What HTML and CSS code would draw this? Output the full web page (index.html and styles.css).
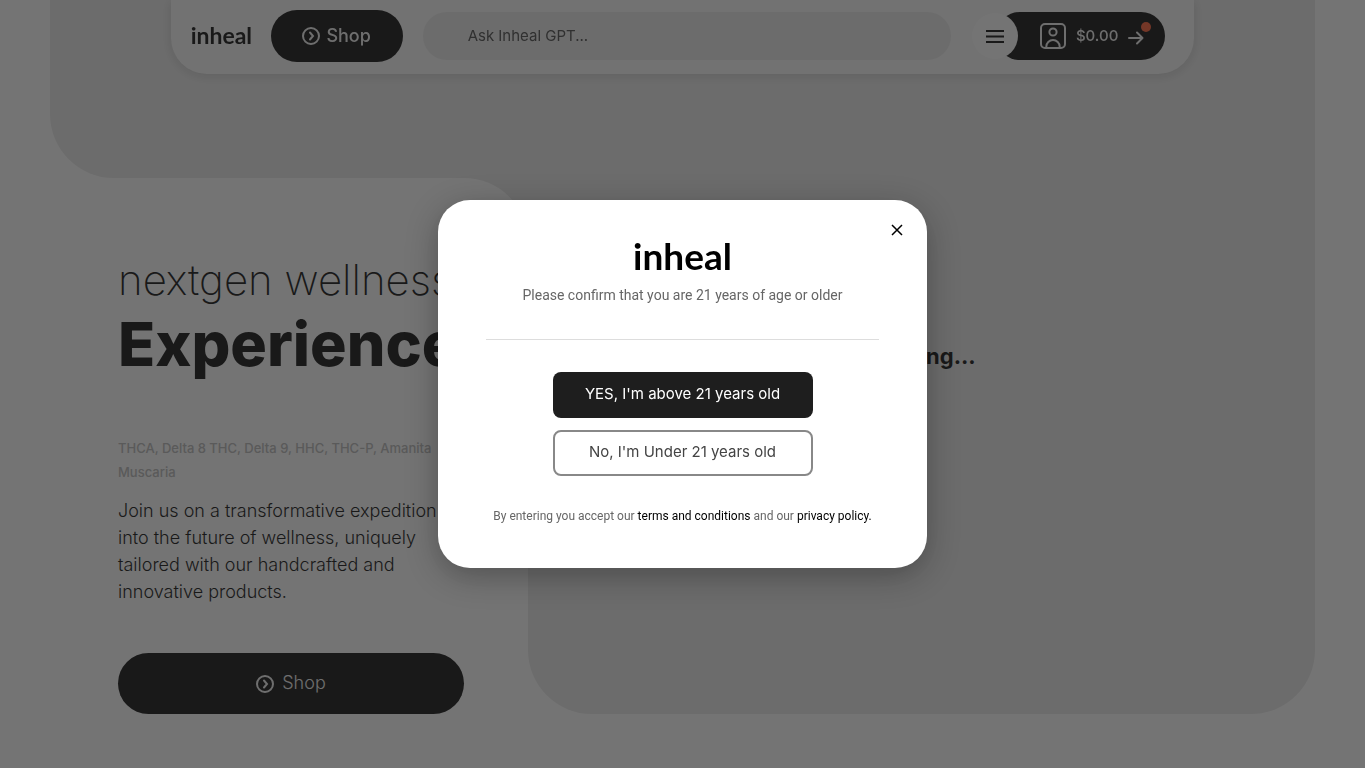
FILE: index.html
```html
<!DOCTYPE html>
<html lang="en">
<head>
<meta charset="utf-8">
<meta name="viewport" content="width=device-width, initial-scale=1">
<title>inheal</title>
<link rel="stylesheet" href="styles.css">
</head>
<body>
<header class="nav">
  <a class="logo" href="#">inheal</a>
  <button class="shop shop-nav" type="button">
    <svg class="shop-icon" viewBox="0 0 18 18" aria-hidden="true"><circle cx="9" cy="9" r="8"/><path d="M8 5.500 11 9 8 12.500"/></svg>
    <span>Shop</span>
  </button>
  <input class="ask" type="text" placeholder="Ask Inheal GPT..." aria-label="Ask Inheal GPT">
  <div class="account">
    <button class="menu" type="button" aria-label="Menu">
      <svg viewBox="0 0 18 14" aria-hidden="true"><path d="M0 2h18M0 7.500h18M0 13h18"/></svg>
    </button>
    <a class="cart" href="#">
      <svg class="user" viewBox="0 0 26 26" aria-hidden="true"><rect x="1" y="1" width="24" height="24" rx="4"/><circle cx="13" cy="9" r="3.600"/><path d="M6.300 25v-1.300a6.700 6.700 0 0 1 13.400 0V25"/></svg>
      <span>$0.00</span>
      <svg class="arrow" viewBox="0 0 16 14" aria-hidden="true"><path d="M1 7h13.500M9 1.500 14.500 7 9 12.500"/></svg>
      <i class="dot"></i>
    </a>
  </div>
</header>

<main class="hero">
  <div class="hero-left">
    <div class="hero-top"></div>
    <div class="panel-wrap">
      <section class="panel">
        <h1 class="title"><span class="title-light">nextgen wellness</span><span class="title-bold">Experience</span></h1>
        <p class="tags">THCA, Delta 8 THC, Delta 9, HHC, THC-P, Amanita Muscaria</p>
        <p class="intro">Join us on a transformative expedition into the future of wellness, uniquely tailored with our handcrafted and innovative products.</p>
        <button class="shop shop-main" type="button">
          <svg class="shop-icon" viewBox="0 0 18 18" aria-hidden="true"><circle cx="9" cy="9" r="8"/><path d="M8 5.500 11 9 8 12.500"/></svg>
          <span>Shop</span>
        </button>
      </section>
    </div>
  </div>
  <div class="hero-right"><p class="loading">Loading...</p></div>
</main>

<div class="overlay">
  <div class="modal" role="dialog" aria-modal="true" aria-labelledby="age-text">
    <button class="close" type="button" aria-label="Close">
      <svg viewBox="0 0 12 12" aria-hidden="true"><path d="M1 1 11 11M11 1 1 11"/></svg>
    </button>
    <div class="modal-logo">inheal</div>
    <p class="confirm" id="age-text">Please confirm that you are 21 years of age or older</p>
    <div class="choices">
      <button class="choice yes" type="button">YES, I'm above 21 years old</button>
      <button class="choice no" type="button">No, I'm Under 21 years old</button>
    </div>
    <p class="legal">By entering you accept our <a href="#">terms and conditions</a> and our <a href="#">privacy policy.</a></p>
  </div>
</div>
</body>
</html>
```
FILE: styles.css
```css
* { box-sizing: border-box; }
body {
  margin: 0;
  height: 100vh;
  overflow: hidden;
  background: #fff;
  color: #1c1c1c;
  font-family: Inter, "Liberation Sans", sans-serif;
}
p, h1 { margin: 0; }
a { color: inherit; text-decoration: none; }
button, input { font: inherit; border: 0; }
svg { display: block; fill: none; stroke: currentColor; stroke-width: 2; flex: none; }

.nav {
  position: fixed;
  top: 0;
  left: 0;
  right: 0;
  width: 75%;
  height: 74px;
  margin: 0 auto;
  padding: 0 29px 2px 20px;
  display: flex;
  align-items: center;
  background: #f9f9f9;
  border-radius: 0 0 36px 36px;
  box-shadow: 0 2px 12px rgba(0, 0, 0, .14);
}
.logo, .modal-logo { font-family: Lato, sans-serif; font-weight: 700; }
.logo { font-size: 23px; line-height: 24px; width: 80px; padding-bottom: 2px; }
.shop {
  display: flex;
  align-items: center;
  justify-content: center;
  gap: 8px;
  background: #1c1c1c;
  color: #f0f0f0;
  font-size: 18px;
}
.shop span { padding-bottom: 2px; }
.shop-icon { width: 18px; height: 18px; stroke-linecap: round; }
.shop-nav { width: 132px; height: 52px; border-radius: 26px; font-weight: 500; gap: 6px; }
.ask {
  flex: 1;
  min-width: 0;
  height: 48px;
  margin: 0 21px 0 20px;
  padding: 0 45px 2px;
  border-radius: 24px;
  background: #ebebeb;
  font-size: 15px;
}
.ask::placeholder { color: #555; opacity: 1; }
.account { display: flex; align-items: center; }
.menu {
  z-index: 1;
  width: 46px;
  height: 46px;
  margin-right: -22px;
  padding: 0 14px;
  border-radius: 50%;
  background: #fff;
  color: #1c1c1c;
}
.cart {
  position: relative;
  display: flex;
  align-items: center;
  gap: 10px;
  height: 48px;
  padding: 0 21px 0 44px;
  border-radius: 24px;
  background: #1c1c1c;
  color: #f0f0f0;
  font-size: 15px;
  font-weight: 500;
}
.cart span { padding-bottom: 2px; }
.user { width: 26px; height: 26px; }
.arrow { width: 16px; height: 14px; margin-top: 4px; stroke-linecap: round; stroke-linejoin: round; }
.dot {
  position: absolute;
  top: 10px;
  right: 14px;
  width: 10px;
  height: 10px;
  border-radius: 50%;
  background: #ff6640;
}

.hero { display: flex; margin: 0 50px; min-height: 714px; }
.hero-left { flex: none; width: 478px; display: flex; flex-direction: column; }
.hero-top { height: 178px; background: #ebebeb; border-bottom-left-radius: 64px; }
.panel-wrap { flex: 1; background: linear-gradient(90deg, #fff 50%, #ebebeb 50%); }
.panel {
  height: 100%;
  padding: 74px 64px 0 68px;
  background: #fff;
  border-top-right-radius: 64px;
}
.hero-right {
  flex: 1;
  display: grid;
  place-items: center;
  padding-bottom: 2px;
  background: #ebebeb;
  border-radius: 0 0 64px 64px;
}
.title span { display: block; white-space: nowrap; }
.title-light { font-size: 42px; line-height: 56px; font-weight: 200; }
.title-bold { font-size: 61px; line-height: 72px; font-weight: 800; }
.tags { margin-top: 56px; font-size: 13px; line-height: 24px; font-weight: 500; color: #bdbdbd; }
.intro { margin-top: 13px; font-size: 18px; line-height: 27px; font-weight: 300; }
.shop-main { width: 100%; height: 61px; margin-top: 48px; border-radius: 32px; font-weight: 300; }
.loading { font-size: 22px; line-height: 28px; font-weight: 700; }

.overlay {
  position: fixed;
  inset: 0;
  z-index: 2;
  display: grid;
  place-items: center;
  background: rgba(23, 23, 23, .6);
}
.modal {
  position: relative;
  width: 489px;
  max-width: 100%;
  padding: 32px 48px 40px;
  border-radius: 32px;
  background: #fff;
  box-shadow: 0 8px 32px rgba(0, 0, 0, .3);
  text-align: center;
}
.close {
  position: absolute;
  top: 20px;
  right: 20px;
  width: 20px;
  height: 20px;
  padding: 4px;
  background: none;
  color: #000;
}
.close svg { stroke-width: 1.500; }
.modal-logo { margin-bottom: 3px; font-size: 37px; line-height: 48px; color: #000; }
.confirm, .legal { font-family: Roboto, sans-serif; line-height: 24px; color: #666; }
.confirm { padding-bottom: 32px; border-bottom: 1px solid #ddd; font-size: 14px; }
.choices { display: flex; flex-direction: column; align-items: center; gap: 12px; padding: 32px 0 28px; }
.choice { width: 260px; height: 46px; padding: 0 0 3px; border-radius: 8px; font-size: 15px; }
.yes { background: #1e1e1e; color: #fff; }
.no { border: 2px solid #888; background: #fff; color: #444; }
.legal { font-size: 12px; }
.legal a { color: #000; }
```
